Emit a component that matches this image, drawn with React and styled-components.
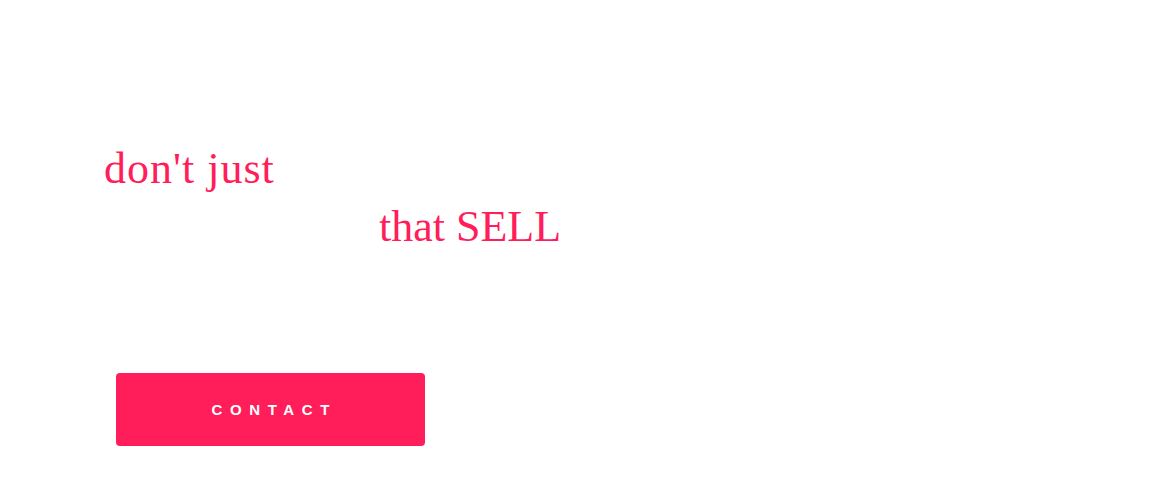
import React from "react";
import styled, { createGlobalStyle } from "styled-components";

const Global = createGlobalStyle`
  html, body { margin: 0; padding: 0; background: #ffffff; }
  body { font-family: "Liberation Sans", Arial, sans-serif; }
`;

const Hero = styled.section`
  width: 1170px;
  height: 500px;
  box-sizing: border-box;
  padding: 140px 0 0 104px;
  display: flex;
  flex-direction: column;
  align-items: flex-start;
  background: #ffffff;
`;

const Heading = styled.h1`
  margin: 0;
  font-family: "Liberation Serif", "Times New Roman", serif;
  font-weight: 400;
  font-size: 44px;
  line-height: 58px;
  color: #ffffff;
`;

const Accent = styled.span`
  color: #ff1e5a;
  letter-spacing: ${(p) => p.$spacing || "0"};
`;

const Button = styled.a`
  margin: 117px 0 0 12px;
  width: 309px;
  height: 73px;
  display: flex;
  align-items: center;
  justify-content: center;
  background: #ff1e5a;
  border-radius: 4px;
  color: #ffffff;
  font-family: "Liberation Sans", Arial, sans-serif;
  font-weight: 700;
  font-size: 15px;
  letter-spacing: 7.6px;
  text-decoration: none;
  text-indent: 7.6px;
`;

export default function App() {
  return (
    <>
      <Global />
      <Hero>
        <Heading>
          <Accent $spacing="1px">don't just</Accent> build websites,
          <br />
          build websites, <Accent>that SELL</Accent>
        </Heading>
        <Button href="#">CONTACT</Button>
      </Hero>
    </>
  );
}
